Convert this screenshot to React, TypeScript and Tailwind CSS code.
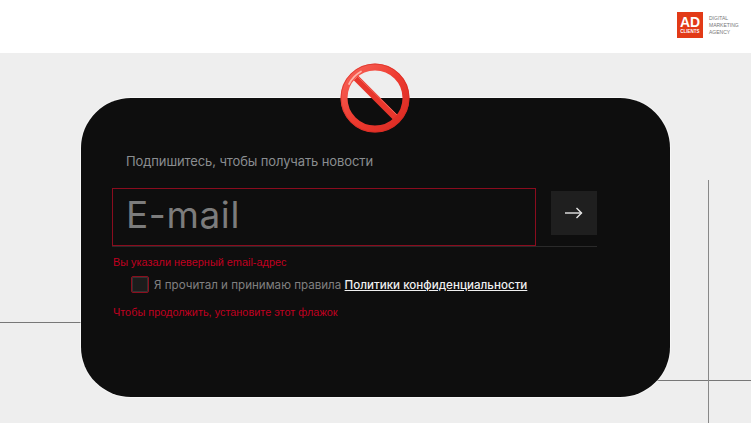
import React from 'react';

function NoSign() {
  return (
    <svg width="70" height="70" viewBox="0 0 70 70" fill="none">
      <defs>
        <linearGradient id="ring" x1="0" y1="0" x2="1" y2="1">
          <stop offset="0" stopColor="#f8655a" />
          <stop offset="0.5" stopColor="#ee3b30" />
          <stop offset="1" stopColor="#d92a22" />
        </linearGradient>
      </defs>
      <path d="M16 15 L56 55" stroke="#e8362c" strokeWidth="6.5" />
      <path d="M16 12 L58 53" stroke="#f4675c" strokeWidth="1" />
      <circle cx="35" cy="35" r="31" stroke="url(#ring)" strokeWidth="7" />
      <circle cx="35" cy="35" r="34" stroke="#d42a22" strokeWidth="0.6" />
      <path d="M9 21 A30 30 0 0 1 21 8.5" stroke="#ffb4a8" strokeWidth="1.75" strokeLinecap="round" />
    </svg>
  );
}

function Arrow() {
  return (
    <svg width="18" height="12" viewBox="0 0 18 12" fill="none" stroke="#e6e6e6">
      <path d="M0 6 H16.5" strokeWidth="1.4" />
      <path d="M11.5 1 L16.5 6 L11.5 11" strokeWidth="1.4" />
    </svg>
  );
}

export default function App() {
  return (
    <div className="relative w-[751px] h-[423px] overflow-hidden bg-[#eeeeee] font-['Inter',sans-serif]">
      <header className="h-[53px] bg-white flex items-start justify-end pt-3 pr-[14px]">
        <div className="flex items-center gap-[6px]">
          <div className="w-[26px] h-[26px] bg-[#e23a17] flex flex-col items-center justify-center text-white font-['Liberation_Sans',sans-serif] font-bold leading-none">
            <span className="text-[14px] leading-[13px]">AD</span>
            <span className="text-[4.5px] leading-[6px]">CLIENTS</span>
          </div>
          <div className="w-[28px] text-[5px] leading-[7px] text-[#777777] font-['Liberation_Sans',sans-serif]">
            DIGITAL MARKETING AGENCY
          </div>
        </div>
      </header>

      {/* decorative lines behind the card */}
      <div className="absolute left-0 top-[322px] w-[100px] h-px bg-[#777777]" />
      <div className="absolute left-[650px] top-[380px] w-[101px] h-px bg-[#777777]" />
      <div className="absolute left-[708px] top-[180px] w-px h-[243px] bg-[#888888]" />

      <main className="relative ml-[81px] mt-[45px] w-[589px] h-[299px] rounded-[50px] bg-[#0e0e0e] pl-[31px] pt-[54px] shadow-[0_0_0_1px_#ffffff80]">
        <div className="absolute left-[259px] top-[-35px]">
          <NoSign />
        </div>
        <p className="ml-[14px] text-[13px] leading-[18px] text-[#8a8d90] tracking-[-0.11px]">Подпишитесь, чтобы получать новости</p>
        <div className="mt-[18px] w-[485px] flex items-start border-b border-b-[#2a2a2a]">
          <div className="w-[424px] h-[58px] border border-[#8a0c1e] pl-[13px] pb-[5px] flex items-center text-[37px] leading-none text-[#7c7c7c] tracking-[0.6px]">
            E-mail
          </div>
          <button className="ml-[15px] mt-[3px] w-[46px] h-[44px] bg-[#1f1f1f] flex items-center justify-center">
            <Arrow />
          </button>
        </div>
        <p className="mt-[7px] ml-[1px] text-[10.9px] leading-[16px] text-[#c00020] font-['Liberation_Sans',sans-serif]">Вы указали неверный email-адрес</p>
        <div className="mt-[6px] ml-[19px] flex items-center gap-[5px]">
          <span className="w-[18px] h-[17px] rounded-[2px] border border-[#8a0f1e] bg-[#1c1c1c] shadow-[inset_0_0_0_1px_#333333]" />
          <span className="text-[11.6px] leading-[16px] text-[#808080]">
            Я прочитал и принимаю правила{' '}
            <a className="text-[#f0f0f0] underline font-medium">Политики конфиденциальности</a>
          </span>
        </div>
        <p className="mt-[11px] ml-[1px] text-[10.9px] leading-[16px] text-[#c00020] font-['Liberation_Sans',sans-serif]">Чтобы продолжить, установите этот флажок</p>
      </main>
    </div>
  );
}
